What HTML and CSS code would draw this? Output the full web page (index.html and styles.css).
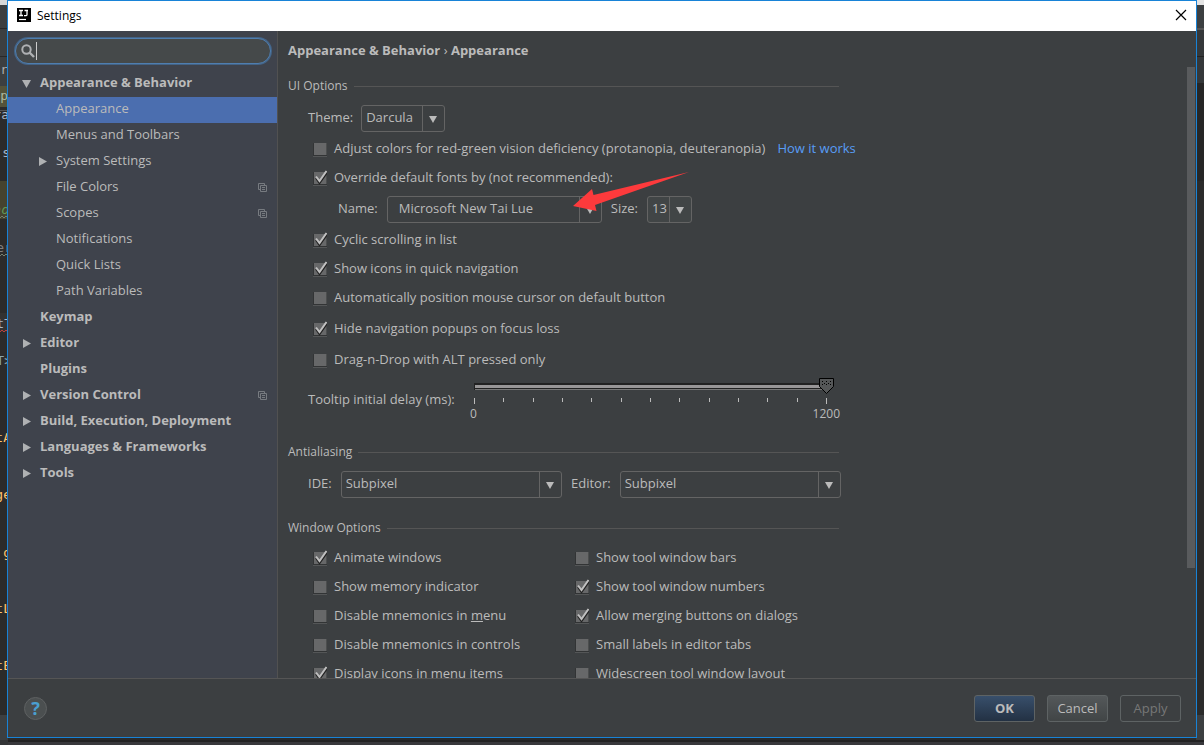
FILE: index.html
```html
<!DOCTYPE html>
<html lang="en">
<head>
<meta charset="utf-8">
<title>Settings</title>
<link rel="stylesheet" href="styles.css">
</head>
<body>
<svg class="editor-left" aria-hidden="true" width="8" height="745" viewBox="0 0 8 745">
  <rect width="8" height="745" fill="#2b2b2b"/>
  <rect width="8" height="5" fill="#d8d8d8"/>
  <rect y="5" width="8" height="102" fill="#3c3f41"/>
  <path d="M0 28.500h8M0 56.500h8" stroke="#282828"/>
  <rect y="86" width="8" height="21" fill="#54533a"/>
  <path d="M0 110.500h8" stroke="#555"/>
  <rect y="181" width="8" height="38" fill="#45432f"/>
  <rect y="313" width="8" height="19" fill="#323232"/>
  <rect y="715" width="8" height="25" fill="#3c3f41"/>
  <rect y="740" width="8" height="5" fill="#333537"/>
  <g font-family="DejaVu Sans Mono, monospace" font-size="13" text-anchor="end">
    <text x="8" y="74" fill="#aaa">r</text>
    <text x="8" y="100" fill="#a9b7a0">p</text>
    <text x="9" y="119" fill="#a9b7c6">ra</text>
    <text x="10" y="157" fill="#a9b7c6">.s</text>
    <text x="9" y="214" fill="#629755" font-style="italic">no</text>
    <text x="12" y="252" fill="#808080">er</text>
    <text x="12" y="328" fill="#a9b7c6">tT</text>
    <text x="12" y="365" fill="#8aa6ad">T&gt;</text>
    <text x="11" y="442" fill="#ffc66d">tA</text>
    <text x="11" y="499" fill="#ffc66d">ge</text>
    <text x="11" y="557" fill="#ffc66d">g</text>
    <text x="11" y="613" fill="#ffc66d">tL</text>
    <text x="11" y="670" fill="#ffc66d">tE</text>
  </g>
  <path d="M0 218l2-2 2 2 2-2 2 2M0 256l2-2 2 2 2-2 2 2" fill="none" stroke="#758070"/>
  <path d="M0 332l2-2 2 2 2-2 2 2" fill="none" stroke="#bc3f3c"/>
</svg>
<div class="editor-right"></div>

<main class="dialog">
  <header class="titlebar">
    <svg width="14" height="14" viewBox="0 0 14 14" aria-hidden="true">
      <rect width="14" height="14" fill="#000"/>
      <path d="M2 2.500h4M4 2.500v5M2 7.500h4M7.500 2.500h3.500M10 2.500v4q0 1.200-1.200 1.200H7" fill="none" stroke="#fff" stroke-width="1.300"/>
      <path d="M2 11.500h7" stroke="#fff" stroke-width="1.200"/>
    </svg>
    <h1>Settings</h1>
    <button class="close" aria-label="Close">
      <svg width="12" height="12" viewBox="0 0 12 12"><path d="M1 1l10 10M11 1L1 11" stroke="#000" stroke-width="1.200"/></svg>
    </button>
  </header>

  <div class="body">
    <nav class="sidebar">
      <label class="search">
        <svg width="14" height="14" viewBox="0 0 14 14" aria-hidden="true"><circle cx="5.500" cy="5.500" r="4.200" fill="none" stroke="#afb1b3" stroke-width="2"/><path d="M8.500 8.500l4.500 4.500" stroke="#afb1b3" stroke-width="2.400"/></svg>
        <span class="caret"></span>
        <input type="text" aria-label="Search settings">
      </label>
      <ul class="tree">
        <li><button class="node top open">Appearance &amp; Behavior</button>
          <ul>
            <li><button class="node selected">Appearance</button></li>
            <li><button class="node">Menus and Toolbars</button></li>
            <li><button class="node closed">System Settings</button></li>
            <li><button class="node project">File Colors</button></li>
            <li><button class="node project">Scopes</button></li>
            <li><button class="node">Notifications</button></li>
            <li><button class="node">Quick Lists</button></li>
            <li><button class="node">Path Variables</button></li>
          </ul>
        </li>
        <li><button class="node top">Keymap</button></li>
        <li><button class="node top closed">Editor</button></li>
        <li><button class="node top">Plugins</button></li>
        <li><button class="node top closed project">Version Control</button></li>
        <li><button class="node top closed">Build, Execution, Deployment</button></li>
        <li><button class="node top closed">Languages &amp; Frameworks</button></li>
        <li><button class="node top closed">Tools</button></li>
      </ul>
    </nav>

    <section class="page">
      <h2 class="crumbs">Appearance &amp; Behavior <span>›</span> Appearance</h2>
      <div class="scroller">
        <form class="options">
          <h3 class="legend">UI Options</h3>
          <div class="field indent">
            <label for="theme">Theme:</label>
            <select id="theme" class="w-theme"><option>Darcula</option></select>
          </div>
          <div class="checks">
            <div class="check-row">
              <label class="check"><input type="checkbox">Adjust colors for red-green vision deficiency (protanopia, deuteranopia)</label>
              <a href="#how">How it works</a>
            </div>
            <label class="check"><input type="checkbox" checked>Override default fonts by (not recommended):</label>
            <div class="field font-row">
              <label for="font">Name:</label>
              <select id="font" class="w-font"><option>Microsoft New Tai Lue</option></select>
              <label for="size">Size:</label>
              <select id="size" class="w-size"><option>13</option></select>
              <svg class="pointer" width="118" height="40" viewBox="0 0 118 40" aria-hidden="true"><path d="M1 35L20 18l1.500 6L117 1 23 34l1.500 6z" fill="#fd3a3c"/></svg>
            </div>
            <label class="check"><input type="checkbox" checked>Cyclic scrolling in list</label>
            <label class="check"><input type="checkbox" checked>Show icons in quick navigation</label>
            <label class="check"><input type="checkbox">Automatically position mouse cursor on default button</label>
            <label class="check spaced"><input type="checkbox" checked>Hide navigation popups on focus loss</label>
            <label class="check spaced"><input type="checkbox">Drag-n-Drop with ALT pressed only</label>
          </div>
          <div class="delay">
            <label for="delay">Tooltip initial delay (ms):</label>
            <div class="slider">
              <input type="range" id="delay" min="0" max="1200" value="1200">
              <div class="ticks"><i></i><i></i><i></i><i></i><i></i><i></i><i></i><i></i><i></i><i></i><i></i><i></i><i></i></div>
              <div class="scale"><span>0</span><span>1200</span></div>
            </div>
          </div>

          <h3 class="legend">Antialiasing</h3>
          <div class="field pair">
            <label for="aa-ide">IDE:</label>
            <select id="aa-ide"><option>Subpixel</option></select>
            <label for="aa-editor">Editor:</label>
            <select id="aa-editor"><option>Subpixel</option></select>
          </div>

          <h3 class="legend">Window Options</h3>
          <div class="columns">
            <label class="check"><input type="checkbox" checked>Animate windows</label>
            <label class="check"><input type="checkbox">Show tool window bars</label>
            <label class="check"><input type="checkbox">Show memory indicator</label>
            <label class="check"><input type="checkbox" checked>Show tool window numbers</label>
            <label class="check"><input type="checkbox"><span>Disable mnemonics in <u>m</u>enu</span></label>
            <label class="check"><input type="checkbox" checked>Allow merging buttons on dialogs</label>
            <label class="check"><input type="checkbox">Disable mnemonics in controls</label>
            <label class="check"><input type="checkbox">Small labels in editor tabs</label>
            <label class="check"><input type="checkbox" checked>Display icons in menu items</label>
            <label class="check"><input type="checkbox">Widescreen tool window layout</label>
          </div>
        </form>
        <div class="scrollbar"></div>
      </div>
    </section>
  </div>

  <footer class="footer">
    <button class="help" aria-label="Help">?</button>
    <button class="btn primary">OK</button>
    <button class="btn">Cancel</button>
    <button class="btn" disabled>Apply</button>
  </footer>
</main>
</body>
</html>
```
FILE: styles.css
```css
* { box-sizing: border-box; }

body {
  margin: 0;
  height: 100vh;
  padding: 0 7px 7px;
  overflow: hidden;
  display: flex;
  background: linear-gradient(#222 0 2px, #38383b 2px) bottom / 100% 5px no-repeat #2b2b2b;
  color: #bbb;
  font: 13px/20px "Open Sans", "Noto Sans", sans-serif;
}

button, input, select { font: inherit; color: inherit; margin: 0; }
ul { list-style: none; margin: 0; padding: 0; }
h1, h2, h3 { margin: 0; font: inherit; }

/* Editor window showing behind the dialog */
.editor-left { position: absolute; left: 0; top: 0; }
.editor-right {
  position: absolute;
  right: 0;
  top: 0;
  bottom: 5px;
  width: 8px;
  background: linear-gradient(#e4e4e4 0 5px, #3c3f41 5px 28px, #555 28px 30px, #35383a 30px 56px, #222 56px 57px, #35383a 57px 83px, #262626 83px 181px, #2b2b2b 181px 715px, #3c3f41 715px);
}

.dialog {
  position: relative;
  flex: 1;
  min-width: 0;
  display: flex;
  flex-direction: column;
  border: 1px solid #1883d7;
  background: #3c3f41;
}

.titlebar {
  display: flex;
  align-items: center;
  gap: 6px;
  height: 30px;
  flex: none;
  padding: 0 9px 2px;
  background: #fff;
  color: #000;
}
.titlebar h1 { font-size: 12px; padding-top: 2px; }
.close {
  margin-left: auto;
  padding: 0;
  border: 0;
  background: none;
  display: flex;
}

.body { flex: 1; min-height: 0; display: flex; }

.sidebar {
  flex: none;
  width: 270px;
  background: #3f434c;
  border-right: 1px solid #515151;
}
.search {
  display: flex;
  align-items: center;
  height: 26px;
  margin: 7px 6px 7px 7px;
  padding: 0 10px 0 5px;
  border: 1px solid #4f7eb0;
  border-radius: 13px;
  background: #45494a;
  box-shadow: 0 0 0 1px #436386;
}
.caret { width: 1px; height: 18px; margin-left: 1px; background: #ccc; }
.search input {
  flex: 1;
  min-width: 0;
  border: 0;
  padding: 0 2px;
  outline: 0;
  background: none;
}

.node {
  display: block;
  width: 100%;
  height: 26px;
  border: 0;
  padding: 0 0 5px 48px;
  background: none;
  text-align: left;
  background-repeat: no-repeat;
}
.node.top { padding-left: 32px; font-weight: 700; }
.node.selected { background: #4b6eaf; }
.node.open {
  background-image: url("data:image/svg+xml,%3Csvg xmlns='http://www.w3.org/2000/svg' width='9' height='8'%3E%3Cpath d='M0 0h9L4.500 8z' fill='%23afb1b3'/%3E%3C/svg%3E");
  background-position: 14px 9px;
}
.node.closed, .node.project {
  --arrow: url("data:image/svg+xml,%3Csvg xmlns='http://www.w3.org/2000/svg' width='8' height='9'%3E%3Cpath d='M0 0v9l8-4.500z' fill='%23afb1b3'/%3E%3C/svg%3E");
  --project: url("data:image/svg+xml,%3Csvg xmlns='http://www.w3.org/2000/svg' width='9' height='9' fill='none' stroke='%23777b80'%3E%3Cpath d='M2 6.500H.5v-6h6V2M2.500 2.500h6v6h-6zM4 4.500h3M4 6.500h3'/%3E%3C/svg%3E");
}
.node.closed { background-image: var(--arrow); background-position: 31px 8px; }
.node.top.closed { background-position: 15px 8px; }
.node.project { background-image: var(--project); background-position: right 10px top 8px; }
.node.top.closed.project {
  background-image: var(--arrow), var(--project);
  background-position: 15px 8px, right 10px top 8px;
}

.page { flex: 1; min-width: 0; display: flex; flex-direction: column; }
.crumbs {
  flex: none;
  height: 36px;
  padding: 9px 10px 0;
  font-weight: 700;
}
.crumbs span { font-weight: 400; }
.scroller {
  flex: 1;
  min-height: 0;
  overflow: hidden;
  display: flex;
  justify-content: space-between;
  padding-right: 1px;
}
.scrollbar { width: 8px; height: 82%; background: #595b5d; }

.options { width: 553px; margin-left: 10px; padding-top: 9px; }
.legend { display: flex; align-items: center; gap: 6px; font-size: 12px; padding-right: 2px; }
.legend::after { content: ""; flex: 1; height: 1px; background: #555; }

.field { display: flex; align-items: center; gap: 9px; }
.field label { padding-bottom: 3px; }
.indent { padding: 9px 0 1px 20px; gap: 8px; }
.font-row { position: relative; padding: 5px 0 1px 25px; }
.pair { padding: 9px 0 20px 20px; }
.pair select { flex: 1; min-width: 0; }

select {
  appearance: none;
  height: 27px;
  padding: 0 24px 3px 4px;
  border: 1px solid #646464;
  border-radius: 3px;
  background: url("data:image/svg+xml,%3Csvg xmlns='http://www.w3.org/2000/svg' width='22' height='25'%3E%3Cpath d='M.5 0v25' stroke='%23646464'/%3E%3Cpath d='M7 10h8l-4 7z' fill='%23bbb'/%3E%3C/svg%3E") right center no-repeat #3c3f41;
}
.w-theme { width: 84px; }
.w-font { width: 215px; padding-left: 11px; }
.w-size { width: 45px; background-color: #414546; }

.pointer { position: absolute; left: 259px; top: -20px; }

.checks { padding-left: 25px; }
.check-row { display: flex; gap: 12px; align-items: center; white-space: nowrap; }
.check {
  display: flex;
  align-items: center;
  gap: 7px;
  height: 29px;
  white-space: nowrap;
}
.check.spaced { margin-top: 2px; }
a { color: #589df6; text-decoration: none; }
input[type="checkbox"] {
  appearance: none;
  flex: none;
  width: 14px;
  height: 18px;
  background: url("data:image/svg+xml,%3Csvg xmlns='http://www.w3.org/2000/svg' width='14' height='18'%3E%3Crect y='4' width='14' height='13.500' rx='1' fill='%23323435'/%3E%3Crect x='1' y='4' width='12.500' height='12' fill='%23676869'/%3E%3Cpath d='M0 17.500h14' stroke='%23545657'/%3E%3C/svg%3E") no-repeat;
}
input[type="checkbox"]:checked {
  background-image: url("data:image/svg+xml,%3Csvg xmlns='http://www.w3.org/2000/svg' width='14' height='18'%3E%3Crect y='4' width='14' height='13.500' rx='1' fill='%23323435'/%3E%3Crect x='1' y='4' width='12.500' height='12' fill='%23676869'/%3E%3Cpath d='M0 17.500h14' stroke='%23545657'/%3E%3Cpath d='M3 10l3.500 5L14 4.500' fill='none' stroke='%23222' stroke-width='2'/%3E%3Cpath d='M3 8.500l3.500 4.500L13.500 3' fill='none' stroke='%23c0c0c0' stroke-width='2'/%3E%3C/svg%3E");
}

.delay {
  display: flex;
  align-items: center;
  justify-content: space-between;
  padding: 5px 0 18px 20px;
}
.delay > label { padding-bottom: 4px; }
.slider { width: 371px; }
.slider input {
  appearance: none;
  display: block;
  width: 360px;
  height: 16px;
  margin-left: 4px;
  background: none;
}
.slider input::-webkit-slider-runnable-track {
  height: 7px;
  background: linear-gradient(#222 0 2px, #989697 2px 5px, #222 5px 6px, #777 6px) no-repeat;
  background-size: 352px 7px;
  border-left: 1px solid #222;
}
.slider input::-webkit-slider-thumb {
  appearance: none;
  width: 15px;
  height: 16px;
  margin-top: -5px;
  background: url("data:image/svg+xml,%3Csvg xmlns='http://www.w3.org/2000/svg' width='15' height='16'%3E%3Cpath d='M.5 .5h14v8L7.500 15.500.5 8.500z' fill='%23555758' stroke='%23000'/%3E%3Cpath d='M3 3.500h10M3 6.500h10' stroke='%23000' stroke-dasharray='1 3'/%3E%3Cpath d='M5 5.500h7' stroke='%23000' stroke-dasharray='1 3'/%3E%3C/svg%3E");
}
.ticks {
  display: flex;
  justify-content: space-between;
  width: 353px;
  height: 6px;
  margin: 4px 0 0 4px;
}
.ticks i { width: 1px; height: 4px; background: #bbb; }
.ticks i:first-child, .ticks i:last-child { height: 6px; }
.scale { display: flex; justify-content: space-between; font-size: 12px; width: 370px; }

.columns { display: grid; grid-template-columns: 262px 1fr; padding: 4px 0 0 25px; }

.footer {
  flex: none;
  display: flex;
  align-items: center;
  gap: 12px;
  height: 59px;
  padding: 0 15px 0 16px;
  border-top: 1px solid #555;
}
.help {
  width: 23px;
  height: 23px;
  margin-right: auto;
  padding: 0;
  border: 1px solid #5e6162;
  border-radius: 50%;
  background: #4b4f50;
  color: #4a9fd0;
  font: 700 18px/20px "Noto Sans", sans-serif;
}
.btn {
  width: 61px;
  height: 27px;
  padding: 0 0 1px;
  border: 1px solid #5e6364;
  border-radius: 3px;
  background: linear-gradient(#54585a, #414546);
}
.btn.primary { font-weight: 700; background: linear-gradient(#384f6b, #233143); }
.btn:disabled { background: none; color: #777; }
```
